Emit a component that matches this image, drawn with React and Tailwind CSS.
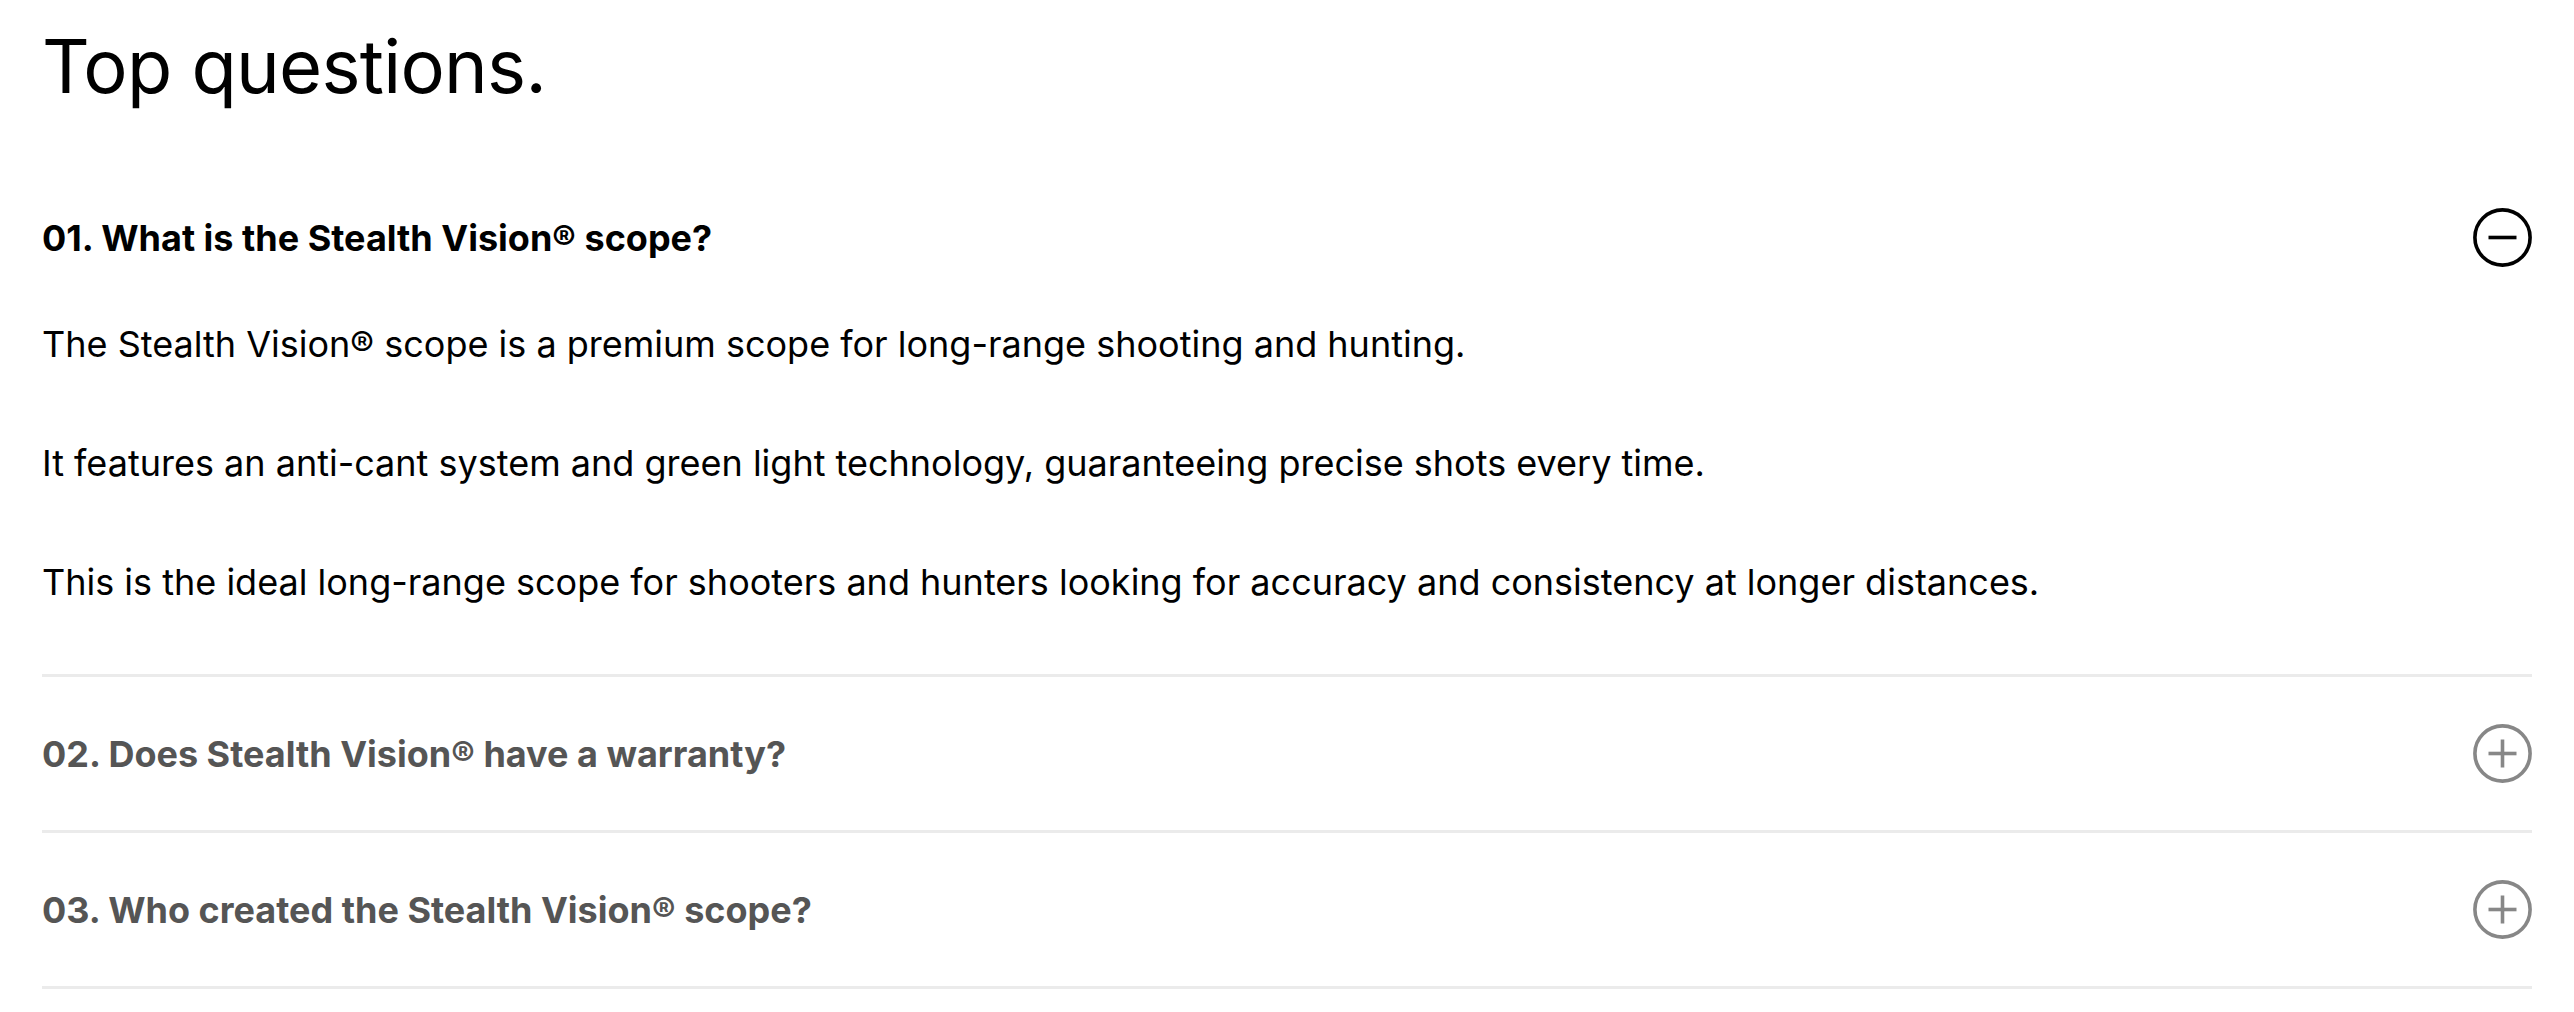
import React from "react";

function CircleIcon({ open }) {
  return (
    <svg width="59" height="59" viewBox="0 0 59 59" fill="none" className="shrink-0">
      <circle cx="29.5" cy="29.5" r="27.6" stroke="currentColor" strokeWidth="3.6" />
      <line x1="15.5" y1="29.5" x2="43.5" y2="29.5" stroke="currentColor" strokeWidth="3.6" />
      {!open && <line x1="29.5" y1="15.5" x2="29.5" y2="43.5" stroke="currentColor" strokeWidth="3.6" />}
    </svg>
  );
}

const items = [
  {
    q: "01. What is the Stealth Vision® scope?",
    open: true,
    a: [
      "The Stealth Vision® scope is a premium scope for long-range shooting and hunting.",
      "It features an anti-cant system and green light technology, guaranteeing precise shots every time.",
      "This is the ideal long-range scope for shooters and hunters looking for accuracy and consistency at longer distances.",
    ],
  },
  { q: "02. Does Stealth Vision® have a warranty?", open: false },
  { q: "03. Who created the Stealth Vision® scope?", open: false },
];

export default function App() {
  return (
    <div
      className="min-h-screen bg-white px-[42px] pt-[29px] text-black"
      style={{ fontFamily: "Inter, 'Noto Sans', sans-serif" }}
    >
      <h1 className="text-[74px] font-normal leading-none tracking-[-0.01em] mb-[58px]">Top questions.</h1>
      <div>
        {items.map((it, i) => (
          <div key={i} className={i > 0 ? "border-t-[3px] border-[#ebebeb]" : ""}>
            <button className="flex w-full items-center justify-between py-[47px] text-left">
              <span
                className={
                  "text-[36px] font-bold leading-none " +
                  (it.open ? "text-black" : "text-[#555555]")
                }
              >
                {it.q}
              </span>
              <span className={it.open ? "text-black" : "text-[#878787]"}>
                <CircleIcon open={it.open} />
              </span>
            </button>
            {it.open && (
              <div className="flex flex-col gap-[65px] pt-[3px] pb-[65px] text-[36px] leading-[54px]">
                {it.a.map((p, j) => (
                  <p key={j}>{p}</p>
                ))}
              </div>
            )}
          </div>
        ))}
        <div className="border-t-[3px] border-[#ebebeb]" />
      </div>
    </div>
  );
}
